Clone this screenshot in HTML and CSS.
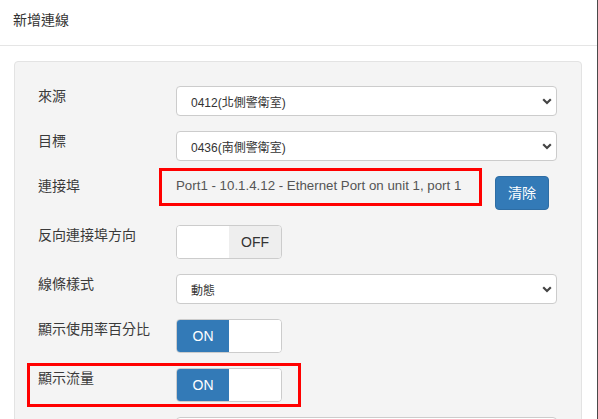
FILE: index.html
```html
<!DOCTYPE html>
<html lang="zh-Hant">
<head>
<meta charset="utf-8">
<title>新增連線</title>
<link rel="stylesheet" href="styles.css">
</head>
<body>
<div class="modal">
  <div class="modal-header">新增連線</div>
  <div class="modal-body">
    <div class="well">
      <div class="row">
        <div class="lbl">來源</div>
        <div class="ctl">
          <div class="select"><span>0412(北側警衛室)</span><svg class="chev" width="10" height="7" viewBox="0 0 10 7"><path d="M1.2 1.3 L5 5 L8.8 1.3" fill="none" stroke="#444" stroke-width="2.2"/></svg></div>
        </div>
      </div>
      <div class="row">
        <div class="lbl">目標</div>
        <div class="ctl">
          <div class="select"><span>0436(南側警衛室)</span><svg class="chev" width="10" height="7" viewBox="0 0 10 7"><path d="M1.2 1.3 L5 5 L8.8 1.3" fill="none" stroke="#444" stroke-width="2.2"/></svg></div>
        </div>
      </div>
      <div class="row">
        <div class="lbl">連接埠</div>
        <div class="ctl port">
          <div class="static">Port1 - 10.1.4.12 - Ethernet Port on unit 1, port 1</div>
          <button class="btn">清除</button>
          <div class="mark mark-port"></div>
        </div>
      </div>
      <div class="row">
        <div class="lbl">反向連接埠方向</div>
        <div class="ctl">
          <div class="toggle off"><span class="half blank"></span><span class="half gray">OFF</span></div>
        </div>
      </div>
      <div class="row">
        <div class="lbl">線條樣式</div>
        <div class="ctl">
          <div class="select"><span>動態</span><svg class="chev" width="10" height="7" viewBox="0 0 10 7"><path d="M1.2 1.3 L5 5 L8.8 1.3" fill="none" stroke="#444" stroke-width="2.2"/></svg></div>
        </div>
      </div>
      <div class="row">
        <div class="lbl">顯示使用率百分比</div>
        <div class="ctl">
          <div class="toggle"><span class="half blue">ON</span><span class="half blank"></span></div>
        </div>
      </div>
      <div class="row flow">
        <div class="lbl">顯示流量</div>
        <div class="ctl">
          <div class="toggle"><span class="half blue">ON</span><span class="half blank"></span></div>
        </div>
        <div class="mark mark-flow"></div>
      </div>
      <div class="row">
        <div class="lbl"></div>
        <div class="ctl">
          <div class="select"></div>
        </div>
      </div>
    </div>
  </div>
</div>
</body>
</html>
```

FILE: styles.css
```css
html, body {
  margin: 0;
  padding: 0;
  height: 100%;
  overflow: hidden;
  background: #fff;
}
body {
  font-family: "Liberation Sans", "Noto Sans CJK TC", sans-serif;
  font-size: 14px;
  color: #333;
}
.modal {
  width: 597px;
  height: 419px;
  border-right: 1px solid #4a4a4a;
  overflow: hidden;
}
.modal-header {
  box-sizing: border-box;
  height: 46px;
  padding: 10px 13px 0;
  line-height: 20px;
  border-bottom: 1px solid #e5e5e5;
}
.modal-body {
  padding: 15px 15px 0 14px;
}
.well {
  background: #f4f4f4;
  border: 1px solid #e3e3e3;
  border-radius: 4px;
  padding: 24px 24px 0 23px;
  height: 600px;
}
.row {
  display: flex;
  align-items: flex-start;
  margin-bottom: 15px;
  position: relative;
}
.lbl {
  width: 138px;
  flex: none;
  min-height: 20px;
  line-height: 20px;
  color: #3a3a3a;
}
.ctl {
  width: 381px;
  flex: none;
  position: relative;
}
.select {
  box-sizing: border-box;
  height: 30px;
  background: #fff;
  border: 1px solid #ccc;
  border-radius: 4px;
  display: flex;
  align-items: center;
  justify-content: space-between;
  padding: 0 4px 0 14px;
  font-size: 12px;
  color: #333;
}
.chev {
  display: block;
}
.port {
  display: flex;
  align-items: flex-start;
}
.static {
  flex: 1;
  line-height: 20px;
  font-size: 13.3px;
  color: #555;
}
.btn {
  box-sizing: border-box;
  height: 34px;
  padding: 0 12px;
  margin-right: 8px;
  background: #337ab7;
  border: 1px solid #2e6da4;
  border-radius: 4px;
  color: #fff;
  font-family: "Liberation Sans", "Noto Sans CJK TC", sans-serif;
  font-size: 14px;
  line-height: 32px;
}
.toggle {
  box-sizing: border-box;
  width: 106px;
  height: 34px;
  border: 1px solid #ccc;
  border-radius: 4px;
  overflow: hidden;
  display: flex;
  background: #fff;
}
.half {
  width: 52px;
  display: flex;
  align-items: center;
  justify-content: center;
  font-size: 14px;
}
.blue {
  background: #337ab7;
  color: #fff;
}
.gray {
  background: #eee;
  color: #333;
}
.blank {
  background: #fff;
}
.mark {
  position: absolute;
  box-sizing: border-box;
  border: 3px solid #f00;
}
.mark-port {
  left: -17px;
  top: -8px;
  width: 323px;
  height: 38px;
}
.mark-flow {
  left: -11px;
  top: -5px;
  width: 274px;
  height: 44px;
}
```
